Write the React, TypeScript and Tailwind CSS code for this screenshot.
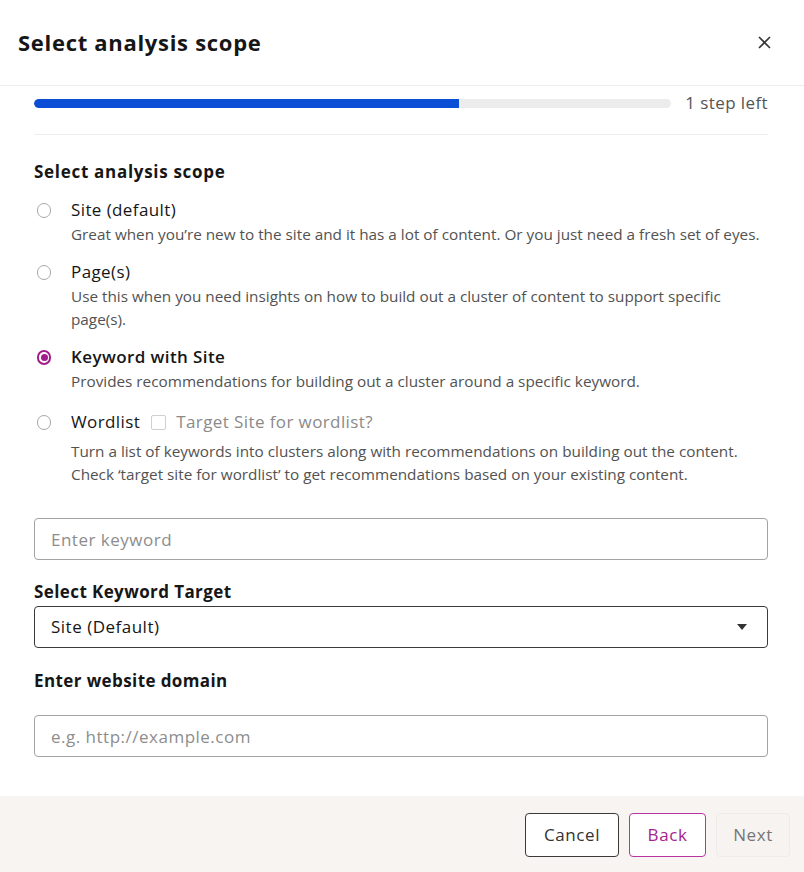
import { useState } from "react";

const options = [
    {
        id: "site",
        label: "Site (default)",
        desc: "Great when you’re new to the site and it has a lot of content. Or you just need a fresh set of eyes.",
    },
    {
        id: "pages",
        label: "Page(s)",
        desc: "Use this when you need insights on how to build out a cluster of content to support specific page(s).",
    },
    {
        id: "keyword",
        label: "Keyword with Site",
        desc: "Provides recommendations for building out a cluster around a specific keyword.",
    },
];

function Radio({ checked }: { checked: boolean }) {
    return checked ? (
        <span className="flex h-[15px] w-[15px] items-center justify-center rounded-full border-2 border-[#a11d8b]">
            <span className="h-[7px] w-[7px] rounded-full bg-[#a11d8b]" />
        </span>
    ) : (
        <span className="h-[15px] w-[15px] rounded-full border border-[#a8a8a8] bg-white" />
    );
}

export default function App() {
    const [scope, setScope] = useState("keyword");
    const [targetWordlist, setTargetWordlist] = useState(false);

    return (
        <div className="flex h-[872px] w-[804px] flex-col bg-white text-[#161616] [font-family:'Open_Sans','Noto_Sans',sans-serif]">
            <header className="flex h-[86px] shrink-0 items-center justify-between border-b border-[#efebe8] pl-[18px] pr-[33px]">
                <h1 className="text-[22px] font-bold tracking-[0.7px]">Select analysis scope</h1>
                <button className="text-[#333]" aria-label="Close">
                    <svg width="13" height="13" viewBox="0 0 13 13" fill="none" stroke="currentColor" strokeWidth="1.6">
                        <path d="M1 1l11 11M12 1L1 12" />
                    </svg>
                </button>
            </header>

            <main className="flex-1 pl-[34px] pr-[36px] pt-[9px]">
                <div className="box-content flex h-[16px] items-center gap-[14px] border-b border-[#eeeeee] pb-[23px]">
                    <div className="h-[9px] flex-1 overflow-hidden rounded-full bg-[#ececec]">
                        <div className="h-full w-[66.7%] rounded-l-full bg-[#0b4ed6]" />
                    </div>
                    <span className="text-[17px] tracking-[0.4px] text-[#555]">1 step left</span>
                </div>

                <h2 className="mt-[25px] text-[17px] font-bold leading-6 tracking-[0.7px]">Select analysis scope</h2>

                <div className="mt-[14px] flex flex-col">
                    {options.map((o) => (
                        <label key={o.id} className="mb-[14px] flex cursor-pointer gap-[20px]" onClick={() => setScope(o.id)}>
                            <span className="flex h-6 w-[17px] shrink-0 items-center justify-center pl-[3px]">
                                <Radio checked={scope === o.id} />
                            </span>
                            <span className="flex flex-col">
                                <span className={`text-[17px] leading-6 tracking-[0.4px] ${scope === o.id ? "font-semibold" : ""}`}>{o.label}</span>
                                <span className="mt-[1px] text-[15.3px] leading-[23px] text-[#525252]">{o.desc}</span>
                            </span>
                        </label>
                    ))}

                    <div className="mt-[3px] flex gap-[20px]">
                        <span className="flex h-6 w-[17px] shrink-0 items-center justify-center pl-[3px]" onClick={() => setScope("wordlist")}>
                            <Radio checked={scope === "wordlist"} />
                        </span>
                        <span className="flex flex-col">
                            <span className="flex h-6 items-center gap-[11px] text-[17px] tracking-[0.4px]">
                                <span className={scope === "wordlist" ? "font-semibold" : ""}>Wordlist</span>
                                <span className="flex items-center gap-[10px] text-[#8a8a8a]" onClick={() => setTargetWordlist(!targetWordlist)}>
                                    <span className="h-[15px] w-[15px] rounded-[2px] border border-[#cfcfcf] bg-white" />
                                    Target Site for wordlist?
                                </span>
                            </span>
                            <span className="mt-[6px] text-[15.3px] leading-[23px] text-[#525252]">
                                Turn a list of keywords into clusters along with recommendations on building out the content.
                                <br />
                                Check ‘target site for wordlist’ to get recommendations based on your existing content.
                            </span>
                        </span>
                    </div>
                </div>

                <input
                    placeholder="Enter keyword"
                    className="mt-[32px] h-[42px] w-full rounded-[4px] border border-[#a3a3a3] px-[16px] text-[17px] tracking-[0.5px] outline-none placeholder:text-[#8d8d8d]"
                />

                <div className="mt-[20px] text-[17px] font-bold leading-6 tracking-[0.4px]">Select Keyword Target</div>
                <button className="mt-[2px] flex h-[42px] w-full items-center justify-between rounded-[4px] border border-[#3a3a3a] pl-[16px] pr-[20px] text-[17px] tracking-[0.5px]">
                    <span>Site (Default)</span>
                    <svg width="10" height="6" viewBox="0 0 10 6">
                        <path d="M0 0h10L5 6z" fill="#333" />
                    </svg>
                </button>

                <div className="mt-[21px] text-[17px] font-bold leading-6 tracking-[0.4px]">Enter website domain</div>
                <input
                    placeholder="e.g. http://example.com"
                    className="mt-[22px] h-[42px] w-full rounded-[4px] border border-[#a3a3a3] px-[16px] text-[17px] tracking-[0.5px] outline-none placeholder:text-[#8d8d8d]"
                />
            </main>

            <footer className="flex h-[76px] shrink-0 items-start justify-end gap-[10px] bg-[#f7f4f2] pr-[14px] pt-[17px]">
                <button className="h-[44px] w-[94px] rounded-[4px] border border-[#3a3a3a] bg-white text-[17px] tracking-[0.6px] text-[#333]">
                    Cancel
                </button>
                <button className="h-[44px] w-[77px] rounded-[4px] border border-[#b8359f] bg-white text-[17px] tracking-[0.6px] text-[#a3238f]">
                    Back
                </button>
                <button className="h-[44px] w-[74px] rounded-[4px] border border-[#efebe8] bg-[#f6f3f1] text-[17px] tracking-[0.6px] text-[#767676]">
                    Next
                </button>
            </footer>
        </div>
    );
}
